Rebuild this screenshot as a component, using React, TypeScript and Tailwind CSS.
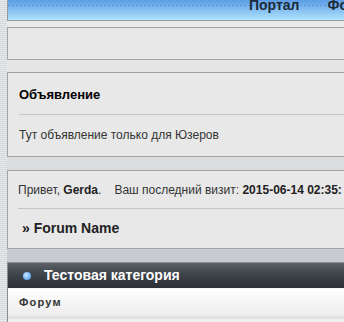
import React from 'react';

const Panel: React.FC<{ className?: string; children?: React.ReactNode }> = ({ className = '', children }) => (
  <div className={`border border-[#a3a3a3] border-r-0 bg-[#e8e8e8] ${className}`}>{children}</div>
);

export default function App() {
  return (
    <div
      className="relative h-[322px] w-[344px] overflow-hidden bg-gradient-to-b from-[#ececec] via-[#dcdde0] to-[#babec5] pl-[7px] text-[#222]"
      style={{ fontFamily: '"Liberation Sans", Arial, sans-serif' }}
    >
      {/* dotted page edge */}
      <div className="absolute left-0 top-0 h-full w-[7px] bg-[repeating-linear-gradient(0deg,#d8d9dc_0px,#d8d9dc_1px,#e6e7ea_1px,#e6e7ea_2px)]" />

      {/* top nav */}
      <div className="relative h-[21px] overflow-hidden border-b border-l border-[#9a9a9a] bg-gradient-to-b from-[#5d9de6] via-[#86bff2] to-[#aee4fb]">
        <div className="absolute left-0 right-0 top-[5px] h-px bg-[repeating-linear-gradient(90deg,#4f8fd8_0px,#4f8fd8_2px,#7ab2ec_2px,#7ab2ec_4px)]" />
        <div className="relative flex h-full items-start gap-[28px] whitespace-nowrap pl-[241px] text-[14px] font-bold leading-none text-[#1d2a38]">
          <span className="-mt-[2px]">Портал</span>
          <span className="-mt-[2px]">Форум</span>
        </div>
      </div>

      <Panel className="mt-[6px] h-[33px]" />

      <Panel className="mt-[12px] h-[85px]">
        <div className="ml-[11px] flex h-[42px] items-center border-b border-[#c6c6c6] pt-[3px] text-[13px] font-bold text-black">
          Объявление
        </div>
        <div className="flex h-[40px] items-center pl-[11px] text-[12px] text-[#333]">
          Тут объявление только для Юзеров
        </div>
      </Panel>

      <Panel className="mt-[13px] h-[79px]">
        <div className="ml-[10px] flex h-[38px] items-center whitespace-nowrap border-b border-[#c6c6c6] text-[12px] text-[#333]">
          <span>
            Привет, <b className="text-[#222]">Gerda</b>.
          </span>
          <span className="ml-[13px]">
            Ваш последний визит: <b className="text-[#222]">2015-06-14 02:35:</b>
          </span>
        </div>
        <div className="flex h-[39px] items-center pl-[14px] text-[14px] font-bold text-[#222]">» Forum Name</div>
      </Panel>

      {/* category */}
      <div className="mt-[13px] border-l border-t border-[#8a8d92]">
        <div className="flex h-[25px] items-center bg-gradient-to-b from-[#5b6068] via-[#3d4148] to-[#2c3036]">
          <span className="ml-[15px] h-[8px] w-[8px] rounded-full bg-[radial-gradient(circle_at_40%_40%,#cfe8ff,#5ea6f4_70%)]" />
          <span className="ml-[13px] text-[14px] font-bold text-white">Тестовая категория</span>
        </div>
        <div className="flex h-[28px] items-center border-t border-[#f4f4f4] bg-gradient-to-b from-[#ffffff] to-[#ececec] pl-[11px] text-[11px] font-bold tracking-[1.2px] text-[#333]">
          Форум
        </div>
        <div className="h-[3px] bg-[#e2e2e2]" />
        <div className="h-[10px] bg-[#eeeeee]" />
      </div>
    </div>
  );
}
